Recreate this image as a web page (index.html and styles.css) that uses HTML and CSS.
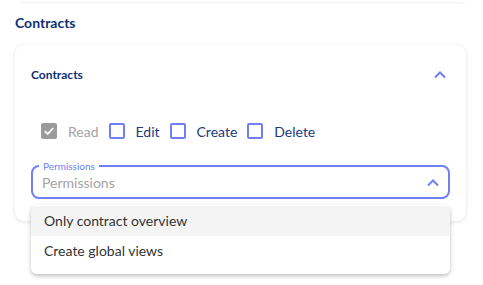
FILE: index.html
```html
<!DOCTYPE html>
<html lang="en">
<head>
  <meta charset="UTF-8">
  <title>Contracts permissions</title>
  <link rel="stylesheet" href="styles.css">
</head>
<body>
<div class="page">
  <div class="top-edge"></div>
  <h2 class="section-title">Contracts</h2>
  <div class="card">
    <div class="card-head">
      <h3 class="card-title">Contracts</h3>
      <svg class="chev" width="14" height="9" viewBox="0 0 14 9"><path d="M2 7.5 L7 2.5 L12 7.5" fill="none" stroke="#6f7ff7" stroke-width="2"/></svg>
    </div>
    <div class="checks">
      <label class="check disabled">
        <span class="box checked">
          <svg width="16" height="16" viewBox="0 0 16 16"><path d="M3.8 8.2 L6.7 11 L12.2 5" fill="none" stroke="#fff" stroke-width="1.8"/></svg>
        </span>
        Read
      </label>
      <label class="check"><span class="box"></span>Edit</label>
      <label class="check"><span class="box"></span>Create</label>
      <label class="check"><span class="box"></span>Delete</label>
    </div>
    <div class="select">
      <span class="legend">Permissions</span>
      <span class="placeholder">Permissions</span>
      <svg class="chev" width="14" height="9" viewBox="0 0 14 9"><path d="M2 7.5 L7 2.5 L12 7.5" fill="none" stroke="#6f7ff7" stroke-width="2"/></svg>
    </div>
    <ul class="menu">
      <li class="hover">Only contract overview</li>
      <li>Create global views</li>
    </ul>
  </div>
</div>
</body>
</html>
```

FILE: styles.css
```css
html, body, h2, h3, ul, li {
  margin: 0;
  padding: 0;
}

ul {
  list-style-type: none;
}

html, body {
  min-height: 285px;
}

body {
  background: #fff;
  font-family: Lato, "Open Sans", sans-serif;
  color: #1c3a7e;
}

.page {
  min-height: 285px;
  padding: 0 17px 0 15px;
}

.top-edge {
  height: 2px;
  margin: 0 0 0 4px;
  box-shadow: 0 1px 2px rgba(0, 0, 0, 0.06);
  border-radius: 0 0 8px 8px;
}

.section-title {
  font-size: 14px;
  font-weight: 700;
  color: #0f2f74;
  padding: 11px 0 0;
  line-height: 20px;
}

.card {
  margin-top: 12px;
  height: 176px;
  border-radius: 9px;
  box-shadow: 0 1px 4px rgba(0, 0, 0, 0.12);
  padding: 0 16px;
}

.card-head {
  display: flex;
  align-items: center;
  justify-content: space-between;
  height: 59px;
}

.card-title {
  font-size: 12px;
  font-weight: 700;
  color: #0f2f74;
}

.card-head .chev {
  margin-right: 3px;
}

.checks {
  display: flex;
  align-items: center;
  margin-top: 15px;
  padding-left: 10px;
  height: 24px;
}

.check {
  display: flex;
  align-items: center;
  font-size: 14px;
  margin-right: 10px;
  color: #1c3a7e;
}

.box {
  width: 16px;
  height: 16px;
  box-sizing: border-box;
  border: 2px solid #6f7ff7;
  border-radius: 2px;
  margin-right: 11px;
  display: inline-flex;
}

.box.checked {
  background: #9b9b9b;
  border: 0;
}

.check.disabled {
  color: #a3a3a3;
}

.select {
  position: relative;
  margin-top: 22px;
  height: 34px;
  border: 2px solid #6f7ff7;
  border-radius: 8px;
  box-sizing: border-box;
  display: flex;
  align-items: center;
  justify-content: space-between;
  padding: 0 8px 0 9px;
}

.legend {
  position: absolute;
  top: -8px;
  left: 6px;
  background: #fff;
  padding: 0 4px;
  font-size: 10px;
  line-height: 14px;
  color: #6f7ff7;
}

.placeholder {
  font-size: 14px;
  color: #a3a3a3;
  padding-top: 1px;
}

.menu {
  position: relative;
  margin-top: 6px;
  background: #fff;
  border-radius: 6px;
  box-shadow: 0 2px 4px rgba(0, 0, 0, 0.25);
  padding: 1px 0 8px;
}

.menu li {
  height: 30px;
  line-height: 30px;
  font-size: 14px;
  color: #333;
  padding-left: 13px;
}

.menu li.hover {
  background: #f4f4f4;
}
```
